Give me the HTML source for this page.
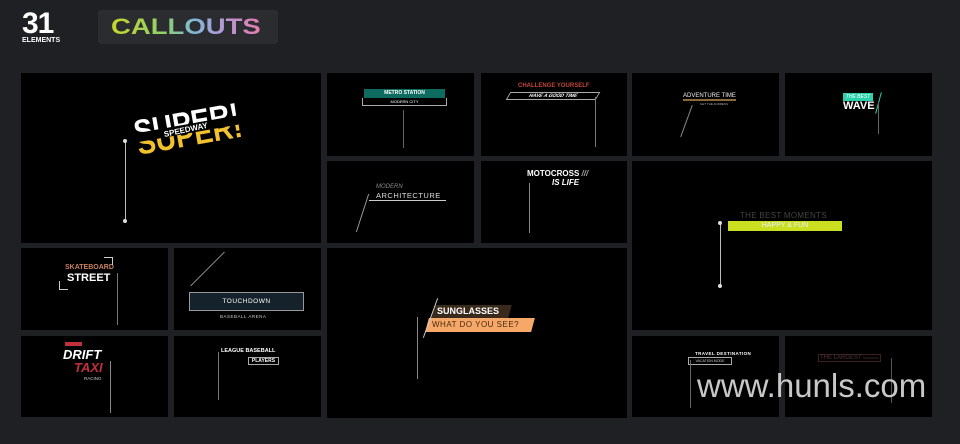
<!DOCTYPE html>
<html><head><meta charset="utf-8"><style>
*{margin:0;padding:0;box-sizing:border-box}
body{width:960px;height:444px;background:#1f2023;position:relative;overflow:hidden;font-family:"Liberation Sans",sans-serif;color:#fff}
.t{position:absolute;background:#000}
.a{position:absolute;white-space:nowrap}
.vl{position:absolute;width:1px;background:#bbb}
.d{position:absolute;width:4px;height:4px;border-radius:50%;background:#ddd}
</style></head><body>
<div class="a" style="left:22px;top:11px;font-size:30px;font-weight:700;letter-spacing:-1px;line-height:26px">31</div>
<div class="a" style="left:22px;top:37px;font-size:7px;font-weight:700">ELEMENTS</div>
<div class="a" style="left:98px;top:10px;width:180px;height:34px;background:#2b2c30;border-radius:3px"></div>
<div class="a" style="left:111px;top:14px;font-size:22px;font-weight:900;letter-spacing:0px;line-height:26px;background:linear-gradient(90deg,#c8d62a,#8fd06a 35%,#7fb8d8 55%,#a8a0d8 70%,#e87ab0);-webkit-background-clip:text;color:transparent;transform:scaleX(1.25);transform-origin:left">CALLOUTS</div>

<div class="t" style="left:21px;top:73px;width:300px;height:170px"></div>
<div class="t" style="left:327px;top:73px;width:147px;height:83px"></div>
<div class="t" style="left:481px;top:73px;width:146px;height:83px"></div>
<div class="t" style="left:632px;top:73px;width:147px;height:83px"></div>
<div class="t" style="left:785px;top:73px;width:147px;height:83px"></div>
<div class="t" style="left:327px;top:161px;width:147px;height:82px"></div>
<div class="t" style="left:481px;top:161px;width:146px;height:82px"></div>
<div class="t" style="left:632px;top:161px;width:300px;height:169px"></div>
<div class="t" style="left:21px;top:248px;width:147px;height:82px"></div>
<div class="t" style="left:174px;top:248px;width:147px;height:82px"></div>
<div class="t" style="left:327px;top:248px;width:300px;height:170px"></div>
<div class="t" style="left:21px;top:336px;width:147px;height:81px"></div>
<div class="t" style="left:174px;top:336px;width:147px;height:81px"></div>
<div class="t" style="left:632px;top:336px;width:147px;height:81px"></div>
<div class="t" style="left:785px;top:336px;width:147px;height:81px"></div>

<!-- SUPER -->
<div class="a" style="left:134px;top:116px;font-size:32px;font-weight:700;transform:rotate(-10deg) scaleX(.88);transform-origin:left;line-height:32px;clip-path:inset(0 0 45% 0)">SUPER!</div>
<div class="a" style="left:137px;top:128px;font-size:32px;font-weight:700;color:#f2c12e;transform:rotate(-10deg) scaleX(.88);transform-origin:left;line-height:32px;clip-path:inset(45% 0 0 0)">SUPER!</div>
<div class="a" style="left:164px;top:130px;font-size:8px;font-weight:700;transform:rotate(-12deg);transform-origin:left">SPEEDWAY</div>
<div class="vl" style="left:125px;top:141px;height:80px"></div><div class="d" style="left:123px;top:139px"></div><div class="d" style="left:123px;top:219px"></div>

<!-- metro -->
<div class="a" style="left:364px;top:89px;width:81px;height:9px;background:#0e6b5f;font-size:5px;font-weight:700;text-align:center;line-height:9px">METRO STATION</div>
<div class="a" style="left:362px;top:98px;width:85px;height:8px;border:1px solid #aaa;border-top:0;font-size:4px;text-align:center;line-height:7px">MODERN CITY</div>
<div class="vl" style="left:403px;top:110px;height:38px;background:#666"></div>

<!-- challenge -->
<div class="a" style="left:518px;top:83px;font-size:6px;font-weight:700;color:#c0483a">CHALLENGE YOURSELF</div>
<div class="a" style="left:508px;top:92px;width:90px;height:8px;border:1px solid #aaa;font-size:5px;font-weight:700;text-align:center;line-height:7px;transform:skewX(-30deg)">HAVE A GOOD TIME</div>
<div class="vl" style="left:595px;top:97px;height:50px;background:#777"></div>

<!-- adventure -->
<div class="a" style="left:683px;top:93px;font-size:6px;color:#eee;border-bottom:2px solid #8a6a3a">ADVENTURE TIME</div>
<div class="a" style="left:700px;top:102px;font-size:3px;color:#aaa">GET THE ADDRESS</div>
<div class="vl" style="left:686px;top:104px;height:34px;transform:rotate(20deg);background:#888"></div>

<!-- wave -->
<div class="a" style="left:843px;top:93px;width:30px;height:8px;background:#2bd1a9;font-size:5px;font-style:italic;line-height:8px;text-align:center">THE BEST</div>
<div class="a" style="left:843px;top:100px;font-size:11px;font-weight:700">WAVE</div>
<div class="vl" style="left:878px;top:92px;height:22px;background:#2bd1a9;transform:rotate(15deg)"></div>
<div class="vl" style="left:878px;top:101px;height:33px;background:#666"></div>

<!-- architecture -->
<div class="a" style="left:376px;top:184px;font-size:6px;font-style:italic;color:#888">MODERN</div>
<div class="a" style="left:376px;top:191px;font-size:7.5px;letter-spacing:.5px;color:#ddd">ARCHITECTURE</div>
<div class="a" style="left:369px;top:200px;width:77px;height:1px;background:#ccc"></div>
<div class="vl" style="left:362px;top:193px;height:40px;transform:rotate(18deg);background:#999"></div>

<!-- motocross -->
<div class="a" style="left:527px;top:169px;font-size:8px;font-weight:700">MOTOCROSS <i style="color:#aaa">///</i></div>
<div class="a" style="left:552px;top:178px;font-size:8px;font-weight:700;font-style:italic">IS LIFE</div>
<div class="vl" style="left:529px;top:183px;height:50px;background:#888"></div>

<!-- best moments -->
<div class="a" style="left:740px;top:211px;font-size:8px;color:#444;letter-spacing:.3px">THE BEST MOMENTS</div>
<div class="a" style="left:728px;top:221px;width:114px;height:10px;background:#c9df20;font-size:7px;color:#eef;text-align:center;line-height:10px">HAPPY &amp; FUN</div>
<div class="vl" style="left:720px;top:223px;height:62px"></div><div class="d" style="left:718px;top:221px"></div><div class="d" style="left:718px;top:284px"></div>

<!-- skateboard -->
<div class="a" style="left:65px;top:264px;font-size:7px;font-weight:700;color:#c88060">SKATEBOARD</div>
<div class="a" style="left:67px;top:272px;font-size:11px;font-weight:700">STREET</div>
<div class="a" style="left:104px;top:257px;width:9px;height:8px;border-top:1px solid #ccc;border-right:1px solid #ccc"></div>
<div class="a" style="left:59px;top:281px;width:9px;height:9px;border-left:1px solid #ccc;border-bottom:1px solid #ccc"></div>
<div class="vl" style="left:117px;top:273px;height:52px;background:#777"></div>

<!-- touchdown -->
<div class="a" style="left:189px;top:292px;width:115px;height:19px;border:1px solid #999;background:#15222c;font-size:6.5px;letter-spacing:.5px;text-align:center;line-height:17px">TOUCHDOWN</div>
<div class="a" style="left:220px;top:314px;font-size:4.5px;color:#ccc;letter-spacing:.5px">BASEBALL ARENA</div>
<div class="vl" style="left:207px;top:245px;height:48px;transform:rotate(45deg);background:#888"></div>

<!-- drift -->
<div class="a" style="left:65px;top:342px;width:17px;height:4px;background:#c0303a"></div>
<div class="a" style="left:63px;top:347px;font-size:13px;font-weight:700;font-style:italic">DRIFT</div>
<div class="a" style="left:74px;top:360px;font-size:13px;font-weight:700;font-style:italic;color:#c0303a">TAXI</div>
<div class="a" style="left:84px;top:376px;font-size:4.5px;color:#ccc">RACING</div>
<div class="vl" style="left:110px;top:361px;height:52px;background:#888"></div>

<!-- league -->
<div class="a" style="left:221px;top:348px;font-size:5.5px;font-weight:700">LEAGUE BASEBALL</div>
<div class="a" style="left:248px;top:357px;width:31px;height:8px;border:1px solid #aaa;font-size:5px;font-weight:700;text-align:center;line-height:6px">PLAYERS</div>
<div class="vl" style="left:218px;top:352px;height:48px;background:#777"></div>

<!-- sunglasses -->
<div class="a" style="left:433px;top:305px;width:77px;height:13px;background:#3a2a1c;transform:skewX(-15deg)"></div>
<div class="a" style="left:437px;top:306px;font-size:9px;font-weight:700">SUNGLASSES</div>
<div class="a" style="left:427px;top:318px;width:106px;height:14px;background:#f5a868;transform:skewX(-15deg)"></div>
<div class="a" style="left:432px;top:320px;font-size:8px;color:#4a2a10;letter-spacing:.5px">WHAT DO YOU SEE?</div>
<div class="vl" style="left:430px;top:297px;height:42px;transform:rotate(20deg);background:#ccc"></div>
<div class="vl" style="left:417px;top:317px;height:62px;background:#888"></div>

<!-- travel -->
<div class="a" style="left:695px;top:351px;font-size:4.5px;font-weight:700;letter-spacing:.4px">TRAVEL DESTINATION</div>
<div class="a" style="left:688px;top:357px;width:44px;height:8px;border:1px solid #aaa;font-size:3.5px;text-align:center;line-height:6px;color:#ccc">VACATION MODE</div>
<div class="vl" style="left:690px;top:360px;height:48px;background:#666"></div>
<!-- largest -->
<div class="a" style="left:818px;top:354px;font-size:6px;color:#553333;border:1px solid #3a2020;padding:0 1px">THE LARGEST <span style="font-size:3px">MUSEUMS</span></div>
<div class="vl" style="left:891px;top:358px;height:45px;background:#555"></div>

<div class="a" style="left:697px;top:367px;font-size:33px;line-height:38px;color:#c8c8c8">www.hunls.com</div>
</body></html>
